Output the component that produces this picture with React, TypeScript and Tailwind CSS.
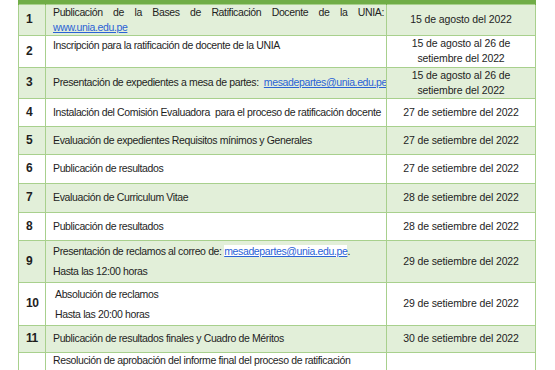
type Row = {
  n: string;
  h: number;
  green: boolean;
  desc: React.ReactNode;
  descClass?: string;
  date: React.ReactNode;
};

const link = "text-[#2a62d6] underline underline-offset-1";

const rows: Row[] = [
  {
    n: "1",
    h: 31,
    green: true,
    desc: (
      <div className="leading-[15px]">
        <div className="text-justify [text-align-last:justify]">
          Publicación de la Bases de Ratificación Docente de la UNIA:
        </div>
        <div>
          <span className={link}>www.unia.edu.pe</span>
        </div>
      </div>
    ),
    date: "15 de agosto del 2022",
  },
  {
    n: "2",
    h: 32,
    green: false,
    desc: <div className="pb-[12px]">Inscripción para la ratificación de docente de la UNIA</div>,
    date: (
      <>
        15 de agosto al 26 de
        <br />
        setiembre del 2022
      </>
    ),
  },
  {
    n: "3",
    h: 31,
    green: true,
    desc: (
      <div className="whitespace-pre">
        {"Presentación de expedientes a mesa de partes:  "}
        <span className={link}>mesadepartes@unia.edu.pe</span>
      </div>
    ),
    date: (
      <>
        15 de agosto al 26 de
        <br />
        setiembre del 2022
      </>
    ),
  },
  {
    n: "4",
    h: 28,
    green: false,
    desc: (
      <div className="whitespace-pre">
        {"Instalación del Comisión Evaluadora  para el proceso de ratificación docente"}
      </div>
    ),
    date: "27 de setiembre del 2022",
  },
  {
    n: "5",
    h: 28,
    green: true,
    desc: "Evaluación de expedientes Requisitos mínimos y Generales",
    date: "27 de setiembre del 2022",
  },
  {
    n: "6",
    h: 29,
    green: false,
    desc: "Publicación de resultados",
    date: "27 de setiembre del 2022",
  },
  {
    n: "7",
    h: 29,
    green: true,
    desc: "Evaluación de Curriculum Vitae",
    date: "28 de setiembre del 2022",
  },
  {
    n: "8",
    h: 28,
    green: false,
    desc: "Publicación de resultados",
    date: "28 de setiembre del 2022",
  },
  {
    n: "9",
    h: 42,
    green: true,
    desc: (
      <div className="leading-[20px]">
        <div className="whitespace-nowrap">
          Presentación de reclamos al correo de:{" "}
          <span className={`${link} bg-white`}>mesadepartes@unia.edu.pe</span>.
        </div>
        <div>Hasta las 12:00 horas</div>
      </div>
    ),
    date: "29 de setiembre del 2022",
  },
  {
    n: "10",
    h: 43,
    green: false,
    descClass: "pl-[9px]",
    desc: (
      <div className="leading-[20px]">
        <div>Absolución de reclamos</div>
        <div>Hasta las 20:00 horas</div>
      </div>
    ),
    date: "29 de setiembre del 2022",
  },
  {
    n: "11",
    h: 27,
    green: true,
    desc: "Publicación de resultados finales y Cuadro de Méritos",
    date: "30 de setiembre del 2022",
  },
  {
    n: "12",
    h: 46,
    green: false,
    desc: (
      <div className="pb-[16px]">
        Resolución de aprobación del informe final del proceso de ratificación
        <br />
        docente
      </div>
    ),
    date: "30 de setiembre del 2022",
  },
];

export default function App() {
  return (
    <div className="h-[370px] w-[555px] overflow-hidden bg-white pl-[18px] font-['Liberation_Sans',Arial,sans-serif] leading-[15px] text-[#1e1e1e]">
      <table className="w-[517px] table-fixed border-collapse">
        <colgroup>
          <col className="w-[27px]" />
          <col className="w-[341px]" />
          <col className="w-[149px]" />
        </colgroup>
        <thead>
          <tr className="h-[4px] bg-[#70ad47]">
            <th className="border-x border-[#70ad47] p-0" />
            <th className="border-x border-[#70ad47] p-0" />
            <th className="border-x border-[#70ad47] p-0" />
          </tr>
        </thead>
        <tbody>
          {rows.map((row) => (
            <tr
              key={row.n}
              style={{ height: row.h }}
              className={row.green ? "bg-[#e2efd9]" : "bg-white"}
            >
              <td className="border border-[#a8d08d] pl-[7px] align-middle text-[12px] font-bold tracking-[-0.4px]">
                {row.n}
              </td>
              <td
                className={`overflow-hidden border border-[#a8d08d] pr-[2px] align-middle text-[10.5px] tracking-[-0.37px] ${row.descClass ?? "pl-[7px]"}`}
              >
                {row.desc}
              </td>
              <td className="border border-[#a8d08d] text-center align-middle text-[10.5px] tracking-[-0.12px]">
                {row.date}
              </td>
            </tr>
          ))}
        </tbody>
      </table>
    </div>
  );
}
